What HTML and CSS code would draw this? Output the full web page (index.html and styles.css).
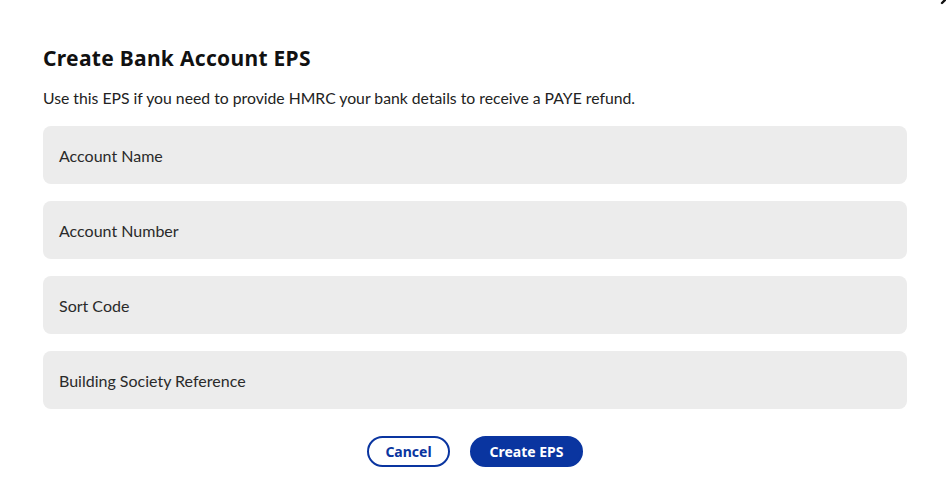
FILE: index.html
```html
<!DOCTYPE html>
<html lang="en">
<head>
<meta charset="utf-8">
<title>Create Bank Account EPS</title>
<link rel="stylesheet" href="styles.css">
</head>
<body>
<div class="modal">
  <svg class="close" width="24" height="24" viewBox="0 0 24 24" aria-hidden="true">
    <path d="M4 4 L20 20 M20 4 L4 20" stroke="#111" stroke-width="2.4" stroke-linecap="round" fill="none"/>
  </svg>
  <h1 class="title">Create Bank Account EPS</h1>
  <p class="intro">Use this EPS if you need to provide HMRC your bank details to receive a PAYE refund.</p>
  <div class="fields">
    <div class="field">Account Name</div>
    <div class="field">Account Number</div>
    <div class="field">Sort Code</div>
    <div class="field">Building Society Reference</div>
  </div>
  <div class="actions">
    <button class="btn btn-outline">Cancel</button>
    <button class="btn btn-solid">Create EPS</button>
  </div>
</div>
</body>
</html>
```
FILE: styles.css
```css
html, body {
  margin: 0;
  padding: 0;
  background: #fff;
}
body {
  font-family: Lato, "Liberation Sans", sans-serif;
  color: #222;
  overflow: hidden;
}
.modal {
  position: relative;
  width: 946px;
  height: 498px;
  box-sizing: border-box;
  padding: 43px 39px 0 43px;
}
.close {
  position: absolute;
  top: -17px;
  right: -16px;
}
.title {
  margin: 0;
  font-family: "Noto Sans", sans-serif;
  font-weight: 700;
  font-size: 21px;
  line-height: 30px;
  color: #111;
  letter-spacing: 0.3px;
}
.intro {
  margin: 15px 0 0;
  font-size: 15.75px;
  line-height: 20px;
  color: #222;
}
.fields {
  margin-top: 18px;
  display: flex;
  flex-direction: column;
  gap: 17px;
}
.field {
  height: 58px;
  box-sizing: border-box;
  background: #ececec;
  border-radius: 8px;
  padding: 0 16px;
  display: flex;
  align-items: center;
  font-size: 16px;
  color: #2a2a2a;
}
.actions {
  margin-top: 27px;
  display: flex;
  justify-content: center;
  gap: 20px;
}
.btn {
  height: 31px;
  border-radius: 16px;
  font-family: "Noto Sans", sans-serif;
  font-weight: 700;
  font-size: 14px;
  padding: 0;
  cursor: pointer;
}
.btn-outline {
  width: 83px;
  background: #fff;
  color: #0a35a0;
  border: 2px solid #0a35a0;
}
.btn-solid {
  width: 113px;
  background: #0a35a0;
  color: #fff;
  border: 2px solid #0a35a0;
}
```
